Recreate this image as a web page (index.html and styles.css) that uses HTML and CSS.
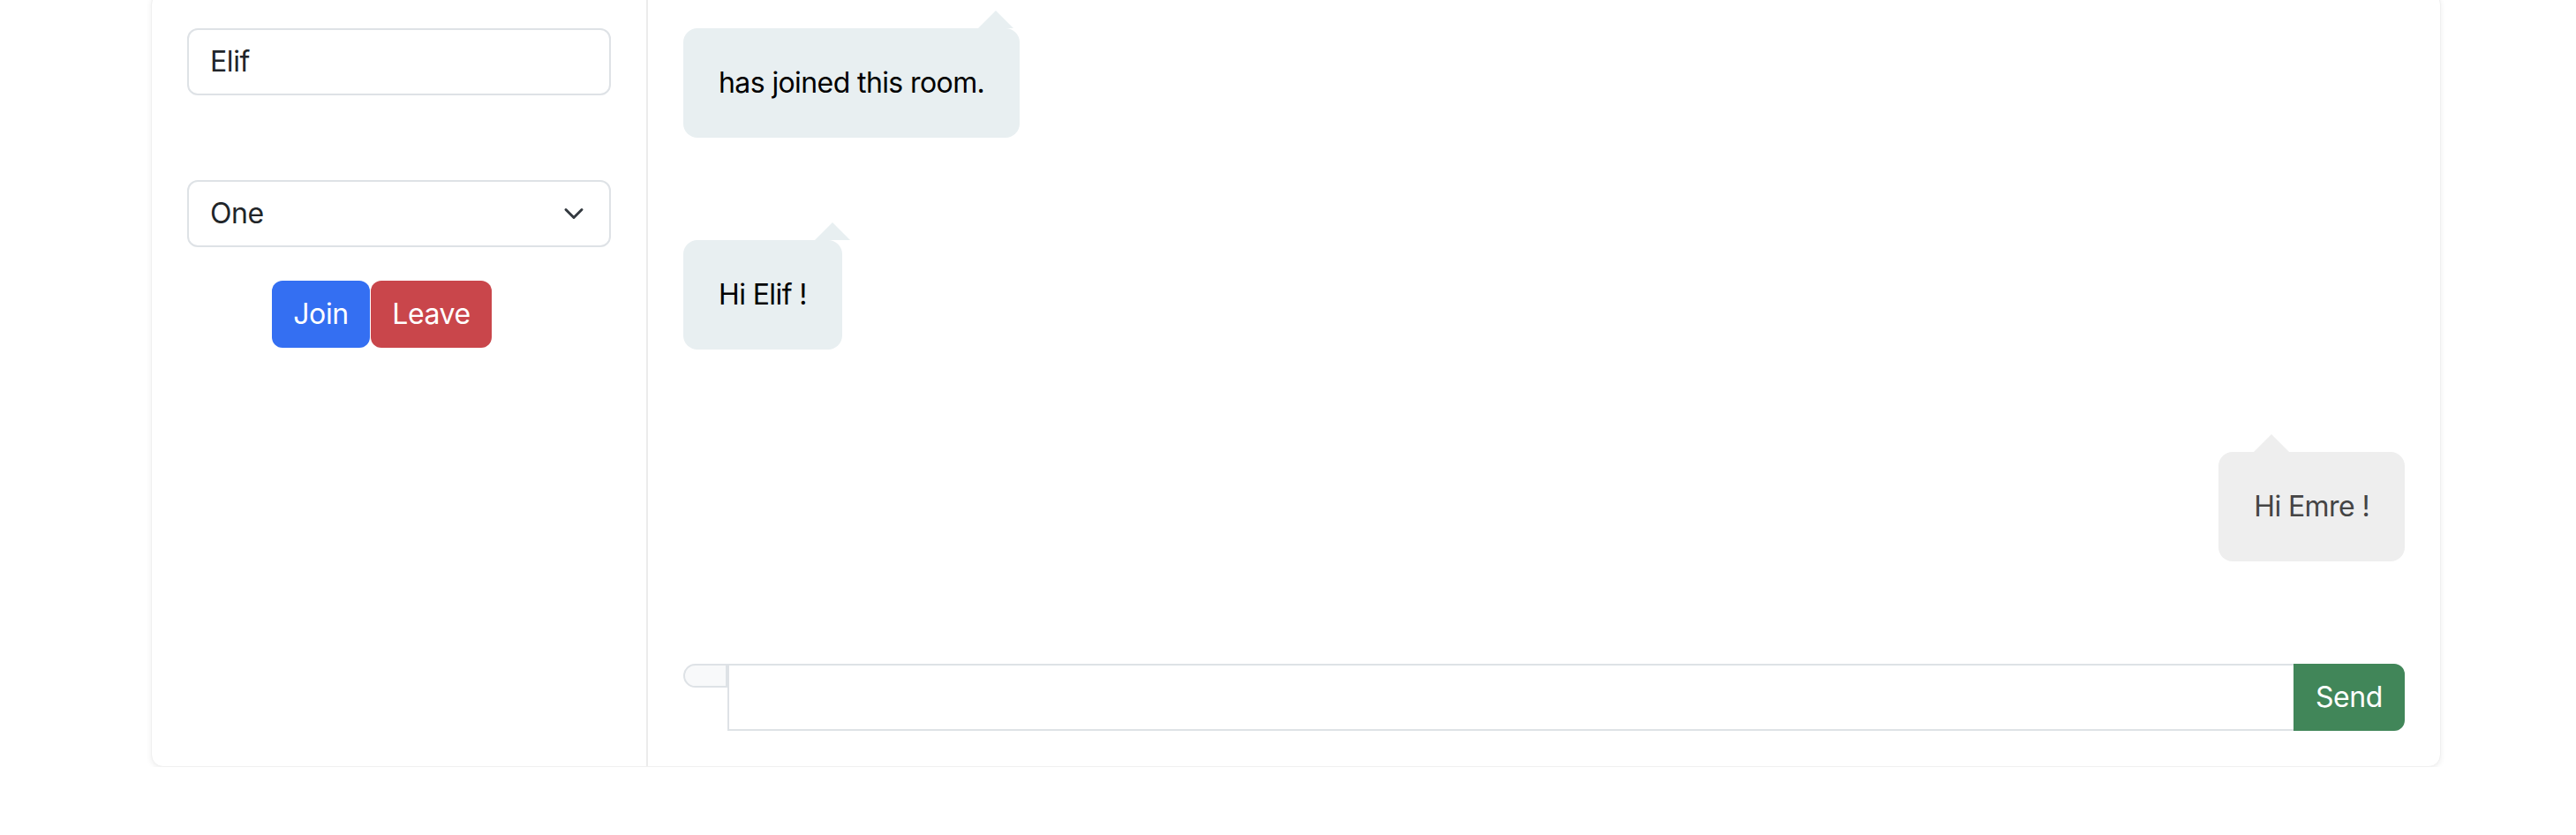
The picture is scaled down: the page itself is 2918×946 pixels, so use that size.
FILE: index.html
```html
<!DOCTYPE html>
<html lang="en">
<head>
<meta charset="utf-8">
<title>Chat</title>
<link rel="stylesheet" href="styles.css">
</head>
<body>
<div class="card">
  <aside class="side">
    <div class="field">Elif</div>
    <div class="field select-box">
      <span>One</span>
      <svg class="chevron" viewBox="0 0 16 16" width="24" height="24"><path d="m2 5 6 6 6-6" fill="none" stroke="#343a40" stroke-width="2" stroke-linecap="round" stroke-linejoin="round"/></svg>
    </div>
    <div class="actions">
      <button class="btn btn-join">Join</button>
      <button class="btn btn-leave">Leave</button>
    </div>
  </aside>
  <main class="chat">
    <div class="bubble bubble-in arrow-a">has joined this room.</div>
    <div class="bubble bubble-in arrow-b">Hi Elif !</div>
    <div class="bubble bubble-out arrow-c">Hi Emre !</div>
    <div class="composer">
      <div class="addon"></div>
      <div class="msg-input"></div>
      <button class="btn btn-send">Send</button>
    </div>
  </main>
</div>
</body>
</html>
```
FILE: styles.css
```css
* { box-sizing: border-box; }
html, body { margin: 0; padding: 0; background: #ffffff; }
body {
  font-family: Inter, "Noto Sans", "Liberation Sans", sans-serif;
  font-size: 32px;
  color: #212529;
  overflow: hidden;
}
.card {
  margin: -9px 0 0 171px;
  width: 2594px;
  display: flex;
  background: #fff;
  border: 1px solid #f0f0f0;
  border-radius: 14px;
  box-shadow: 0 2px 6px rgba(0, 0, 0, 0.07);
}
.side {
  width: 562px;
  flex: none;
  padding: 40px;
  border-right: 2px solid #ececec;
}
.field {
  height: 76px;
  border: 2px solid #dee2e6;
  border-radius: 12px;
  padding: 0 24px;
  display: flex;
  align-items: center;
  line-height: 48px;
  color: #212529;
  letter-spacing: -0.4px;
}
.select-box {
  margin-top: 96px;
  justify-content: space-between;
  padding-right: 28px;
}
.chevron { display: block; }
.actions {
  margin-top: 38px;
  margin-left: 96px;
  display: flex;
}
.btn {
  font-family: inherit;
  font-size: 32px;
  line-height: 48px;
  height: 76px;
  padding: 0;
  border: none;
  border-radius: 12px;
  color: #fff;
  cursor: pointer;
  letter-spacing: -0.4px;
}
.btn-join { background: #346ff2; width: 111px; }
.btn-leave { background: #c9464b; width: 137px; margin-left: 1px; }
.chat {
  flex: 1;
  padding: 40px;
  display: flex;
  flex-direction: column;
  gap: 116px;
}
.bubble {
  position: relative;
  padding: 38px 40px;
  line-height: 48px;
  border-radius: 16px;
  align-self: flex-start;
  letter-spacing: -0.6px;
}
.bubble::before {
  content: "";
  position: absolute;
  top: -20px;
  width: 0;
  height: 0;
  border-left: 20px solid transparent;
  border-right: 20px solid transparent;
  border-bottom: 20px solid #e8eff1;
}
.bubble-in { background: #e8eff1; color: #000; }
.bubble-out { background: #eeeeee; color: #444; align-self: flex-end; }
.bubble-out::before { border-bottom-color: #eeeeee; }
.arrow-a::before { left: 334px; }
.arrow-b::before { left: 149px; }
.arrow-c::before { left: 40px; }
.composer {
  display: flex;
  align-items: flex-start;
}
.addon {
  width: 50px;
  height: 27px;
  background: #f8f9fa;
  border: 2px solid #dee2e6;
  border-radius: 14px 0 0 14px;
}
.msg-input {
  flex: 1;
  height: 76px;
  border: 2px solid #dee2e6;
  border-right: none;
}
.btn-send {
  background: #418659;
  width: 126px;
  border-radius: 0 12px 12px 0;
}
```
